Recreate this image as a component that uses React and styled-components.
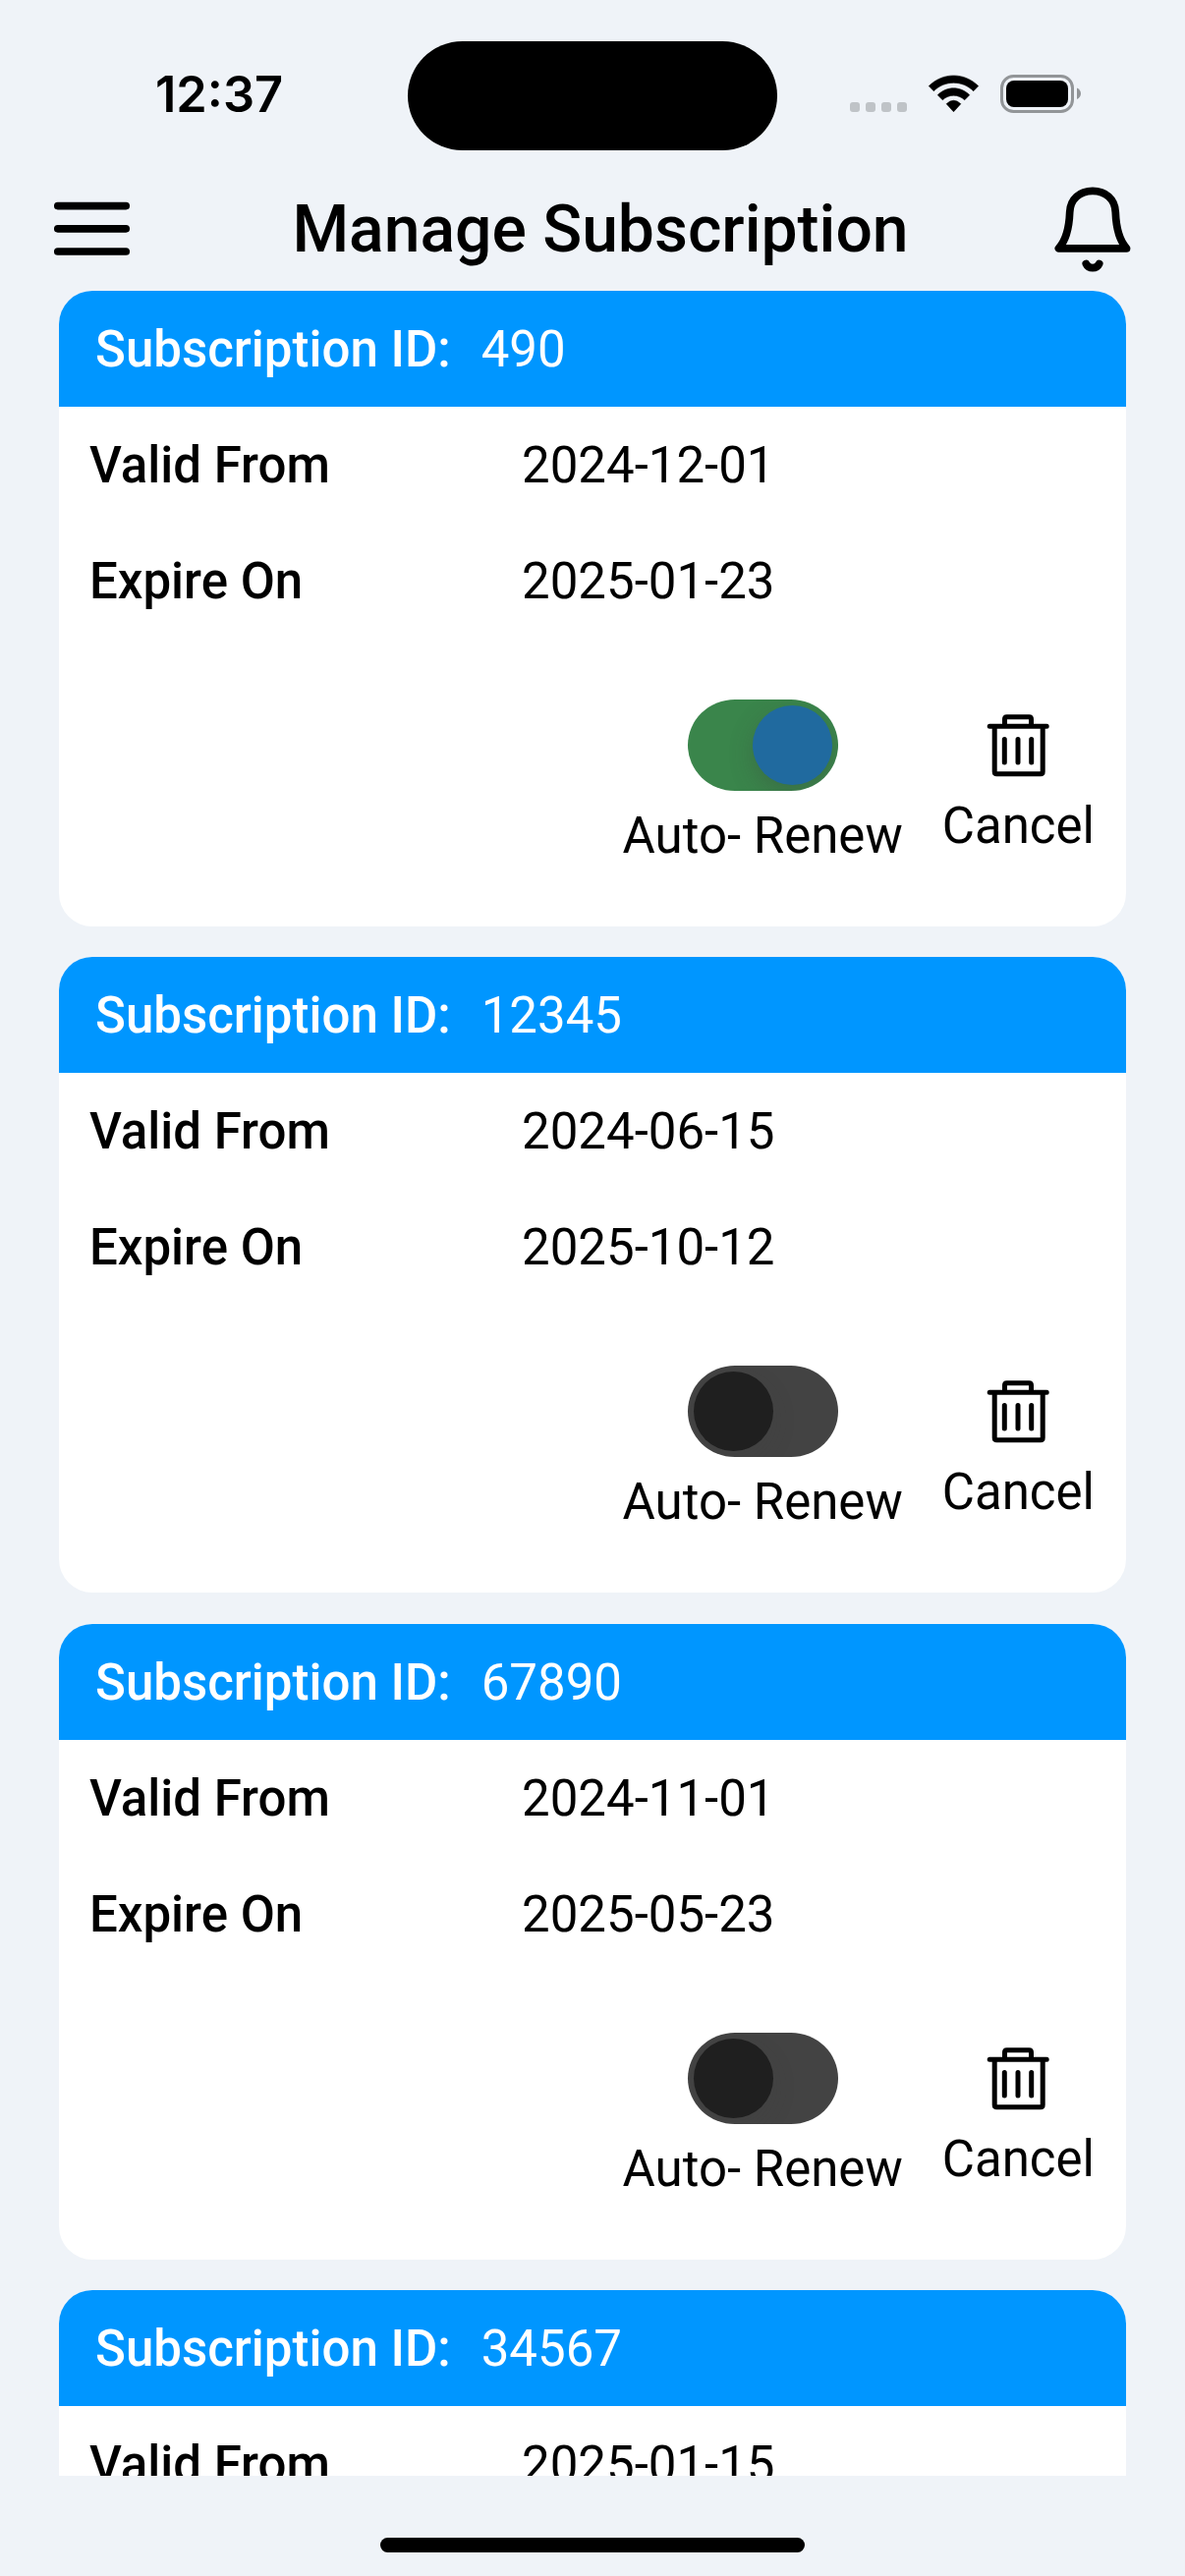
import React, { useState } from "react";
import styled, { createGlobalStyle } from "styled-components";

const GlobalStyle = createGlobalStyle`
  * { box-sizing: border-box; }
  html, body { margin: 0; padding: 0; }
  body { background: #eff3f8; overflow: hidden; }
`;

const Screen = styled.div`
  display: flex;
  flex-direction: column;
  width: 1206px;
  height: 2622px;
  overflow: hidden;
  background: #eff3f8;
  color: #000;
  font-family: Roboto, sans-serif;
`;

const StatusBar = styled.div`
  display: grid;
  grid-template-columns: 415px 376px 1fr;
  flex: none;
  height: 177px;
  padding-top: 41.5px;
`;

const Clock = styled.div`
  padding: 24px 0 0 158px;
  font: 600 50.5px/60px Inter, sans-serif;
  white-space: nowrap;
`;

const Island = styled.div`
  height: 111px;
  border-radius: 56px;
  background: #000;
`;

const StatusIcons = styled.svg`
  width: 240px;
  height: 50px;
  margin: 29.5px 0 0 69px;
`;

const TopBar = styled.header`
  display: grid;
  grid-template-columns: 80px 1fr 80px;
  align-items: center;
  flex: none;
  height: 119px;
  padding: 0 54px 7px 54px;
`;

const IconButton = styled.button`
  display: flex;
  padding: 0;
  border: 0;
  background: none;
  color: #000;
`;

const Title = styled.h1`
  margin: 0;
  padding: 2px 0 0 16px;
  font-size: 66px;
  font-weight: 500;
  line-height: 78px;
  text-align: center;
  white-space: nowrap;
`;

const List = styled.main`
  display: flex;
  flex-direction: column;
  gap: 31.4px;
  flex: none;
  height: 2224px;
  padding: 0 60px;
  overflow: hidden;
`;

const Card = styled.section`
  flex: none;
  height: 647px;
  border-radius: 34px;
  background: #fff;
  overflow: hidden;
`;

const CardHeader = styled.div`
  display: flex;
  align-items: center;
  gap: 31px;
  height: 118px;
  padding: 1px 0 0 37px;
  background: #0096ff;
  color: #fff;
  font-size: 51px;
`;

const Row = styled.div`
  display: grid;
  grid-template-columns: 440px 1fr;
  align-items: center;
  height: 118px;
  padding: 1px 0 0 31px;
  font-size: 51px;
`;

const Label = styled.span`
  font-weight: 500;
  white-space: nowrap;
`;

const Value = styled.span`
  font-weight: 400;
  white-space: nowrap;
`;

const Actions = styled.div`
  display: flex;
  justify-content: flex-end;
  align-items: flex-start;
  gap: 40px;
  padding: 62px 32px 0 0;
`;

const Action = styled.div`
  display: flex;
  flex-direction: column;
  align-items: center;
  gap: ${(p) => p.$gap}px;
  padding-top: ${(p) => p.$top}px;
  font-size: 51px;
  line-height: 60px;
  white-space: nowrap;
`;

const Track = styled.button`
  display: flex;
  align-items: center;
  justify-content: ${(p) => (p.$on ? "flex-end" : "flex-start")};
  width: 153px;
  height: 93px;
  padding: 0 6px;
  border: 0;
  border-radius: 48px / 46.5px;
  overflow: hidden;
  background: ${(p) => (p.$on ? "#3a854b" : "#434343")};
`;

const Knob = styled.span`
  width: 81px;
  height: 81px;
  border-radius: 50%;
  background: ${(p) => (p.$on ? "#206a9f" : "#1f1f1f")};
  box-shadow: 0 9px 24px rgba(60, 60, 60, ${(p) => (p.$on ? 0.3 : 0.15)});
`;

const HomeBar = styled.div`
  flex: none;
  align-self: center;
  width: 432px;
  height: 15px;
  margin-top: 63px;
  border-radius: 8px;
  background: #000;
`;

const subscriptions = [
  { id: "490", from: "2024-12-01", to: "2025-01-23", renew: true },
  { id: "12345", from: "2024-06-15", to: "2025-10-12", renew: false },
  { id: "67890", from: "2024-11-01", to: "2025-05-23", renew: false },
  { id: "34567", from: "2025-01-15", renew: false },
];

function MenuIcon() {
  return (
    <svg width="80" height="60" viewBox="0 0 80 60" fill="none" stroke="currentColor" strokeWidth="7.7" strokeLinecap="round">
      <path d="M4.8 6.6h69.4M4.8 29.8h69.4M4.8 53h69.4" />
    </svg>
  );
}

function BellIcon() {
  return (
    <svg width="80" height="90" viewBox="0 1.5 80 90" fill="none" stroke="currentColor" strokeWidth="7.7" strokeLinecap="round" strokeLinejoin="round">
      <path d="M5.4 66.3H74.6C66.5 57.5 63.8 43 63.3 29.5C62.8 16 53 7.9 40 7.9S17.2 16 16.7 29.5C16.2 43 13.5 57.5 5.4 66.3Z" />
      <path d="M33.3 82C36 87.6 44 87.6 46.7 82" />
    </svg>
  );
}

function TrashIcon() {
  return (
    <svg width="64" height="64" viewBox="0 0 64 64" fill="none" stroke="currentColor" strokeWidth="5" strokeLinecap="round" strokeLinejoin="round">
      <path d="M3.2 12.3H61.2M8.2 12.3V58.6Q8.2 60.8 10.4 60.8H55Q57.2 60.8 57.2 58.6V12.3M18.5 12.3V5Q18.5 2.8 20.7 2.8H43.3Q45.5 2.8 45.5 5V12.3M18.3 25.5V49M32 25.5V49M45.7 25.5V49" />
    </svg>
  );
}

function StatusGlyphs() {
  return (
    <StatusIcons viewBox="860 71 240 50">
      <g fill="#bfc3c7">
        <rect x="865" y="104" width="10" height="10" rx="3" />
        <rect x="881" y="104" width="10" height="10" rx="3" />
        <rect x="897" y="104" width="10" height="10" rx="3" />
        <rect x="913" y="104" width="10" height="10" rx="3" />
      </g>
      <path d="M945.3 87.6C959.5 73.4 981.5 73.4 995.7 87.6L990.7 92.7C979.5 81.5 961.5 81.5 950.3 92.7ZM954.3 96.7C963.5 87.5 977.5 87.5 986.7 96.7L981.7 101.8C975.5 95.6 965.5 95.6 959.3 101.8ZM963.2 105.7Q970.5 98.8 977.8 105.7L970.5 113.8Z" fill="#000" stroke="#000" strokeWidth=".6" strokeLinejoin="round" />
      <rect x="1019.5" y="77.5" width="72" height="36" rx="12" fill="none" stroke="#929598" strokeWidth="3" />
      <rect x="1024" y="82" width="63" height="27" rx="8" />
      <path d="M1096 89.5Q1100 91.5 1100 95.2T1096 101Z" fill="#929598" />
    </StatusIcons>
  );
}

function SubscriptionCard({ item }) {
  const [on, setOn] = useState(item.renew);
  return (
    <Card>
      <CardHeader>
        <Label>Subscription ID:</Label>
        <Value>{item.id}</Value>
      </CardHeader>
      <Row>
        <Label>Valid From</Label>
        <Value>{item.from}</Value>
      </Row>
      {item.to && (
        <>
          <Row>
            <Label>Expire On</Label>
            <Value>{item.to}</Value>
          </Row>
          <Actions>
            <Action $gap={16} $top={0}>
              <Track $on={on} onClick={() => setOn(!on)}>
                <Knob $on={on} />
              </Track>
              Auto- Renew
            </Action>
            <Action $gap={20} $top={15}>
              <IconButton>
                <TrashIcon />
              </IconButton>
              Cancel
            </Action>
          </Actions>
        </>
      )}
    </Card>
  );
}

export default function App() {
  return (
    <Screen>
      <GlobalStyle />
      <StatusBar>
        <Clock>12:37</Clock>
        <Island />
        <StatusGlyphs />
      </StatusBar>
      <TopBar>
        <IconButton>
          <MenuIcon />
        </IconButton>
        <Title>Manage Subscription</Title>
        <IconButton>
          <BellIcon />
        </IconButton>
      </TopBar>
      <List>
        {subscriptions.map((item) => (
          <SubscriptionCard key={item.id} item={item} />
        ))}
      </List>
      <HomeBar />
    </Screen>
  );
}
